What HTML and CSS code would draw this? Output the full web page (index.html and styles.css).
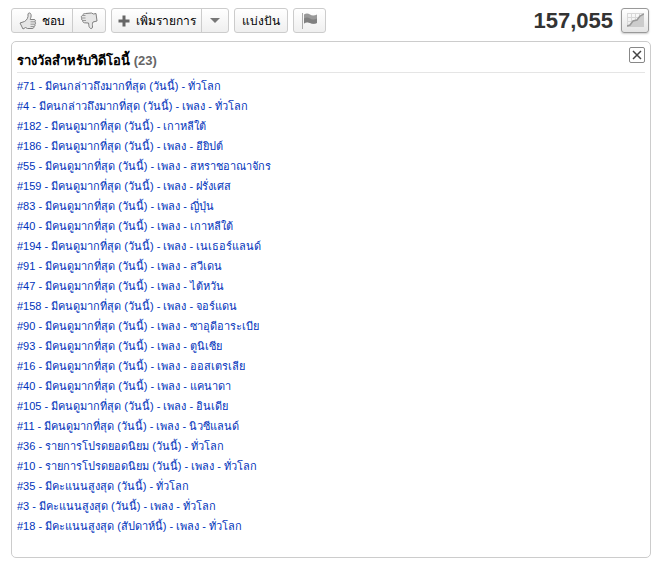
FILE: index.html
```html
<!DOCTYPE html>
<html lang="th">
<head>
  <meta charset="UTF-8" />
  <meta name="viewport" content="width=device-width, initial-scale=1.0"/>
  <title>รางวัลสำหรับวิดีโอนี้</title>
  <link rel="stylesheet" href="styles.css">
</head>
<body>
  <div class="actions">
    <div class="btn-group">
      <button type="button" class="btn btn-like">
        <svg width="18" height="18" viewBox="0 0 18 18" aria-hidden="true">
          <path class="thumb" d="M1 11L5.500 9.500C8 8 9.500 5.500 9 2C9.500.5 11.500.5 12 2.500C12.500 4.500 11.500 6 11.200 7.500L15 7.500C16.800 7.500 16.800 9.500 15.800 9.800C17 10.500 16.800 12 15.700 12.200C16.500 13 16 14.300 15 14.500C15.200 15.500 14.500 16.500 13 16.500L8.500 16.500L6.500 15.500L4 17Z"/>
          <path class="thumb-line" d="M11.500 9.800H16M11.500 12.200H15.700M11.500 14.500H15"/>
        </svg>
        <span>ชอบ</span>
      </button>
      <button type="button" class="btn btn-dislike" aria-label="ไม่ชอบ">
        <svg width="18" height="18" viewBox="0 0 18 18" aria-hidden="true">
          <path class="thumb" d="M2.500 3.500C3 2 4 1.500 5.500 1.500L11.500 1L13.500 2L16 1.500L17 9L13 10C12 11.500 12.500 13.500 12.500 15C12.300 17 10.500 17 9.500 15.500C8.500 14 9 12.500 8.500 11L4.500 10.800C2.800 10.500 2.500 9.500 3 8.500C1.500 8.200 1 6.800 2 6C.8 5.500 1.200 3.800 2.500 3.500Z"/>
          <path class="thumb-line" d="M2.500 3.500H5.500M2 6H5.500M3 8.500H6"/>
        </svg>
      </button>
    </div>

    <div class="btn-group">
      <button type="button" class="btn btn-add">
        <svg width="12" height="12" viewBox="0 0 12 12" aria-hidden="true">
          <path fill="#666" d="M4.500 .5h3v4h4v3h-4v4h-3v-4h-4v-3h4z"/>
        </svg>
        <span>เพิ่มรายการ</span>
      </button>
      <button type="button" class="btn btn-menu" aria-label="เมนู">
        <svg width="10" height="5" viewBox="0 0 10 5" aria-hidden="true">
          <path fill="#777" d="M0 0h10L5 5z"/>
        </svg>
      </button>
    </div>

    <div class="btn-group">
      <button type="button" class="btn btn-share">แบ่งปัน</button>
    </div>

    <div class="btn-group">
      <button type="button" class="btn btn-flag" aria-label="รายงาน">
        <svg width="16" height="16" viewBox="0 0 16 16" aria-hidden="true">
          <path stroke="#aaa" d="M.5 0v16"/>
          <path fill="#999" d="M2 1.500C4 0 6 0 8 1.500S13 2.500 15 1.500V10C13 11 10 11 8 10S4 9 2 10.500z"/>
          <path fill="#808080" d="M2 5.500C4 4 6 4 8 5.500S13 6.500 15 5.500V10C13 11 10 11 8 10S4 9 2 10.500z"/>
        </svg>
      </button>
    </div>

    <div class="views">
      <strong class="view-count">157,055</strong>
      <button type="button" class="btn-stats" aria-label="สถิติ">
        <svg width="17" height="15" viewBox="0 0 17 15" aria-hidden="true">
          <path fill="none" stroke="#d8d8d8" d="M.5 0v14M4.500 0v14M8.500 0v14M12.500 0v14M16.500 0v14M0 .5h17M0 4.500h17M0 8.500h17M0 12.500h17"/>
          <path fill="#ccc" d="M0 13L3 12L6 8L10 7L13 3L17 1V14H0z"/>
          <path fill="none" stroke="#999" stroke-width="1.500" d="M0 13L3 12L6 8L10 7L13 3L17 1"/>
        </svg>
      </button>
    </div>
  </div>

  <div class="panel">
    <div class="panel-header">
      <h1>รางวัลสำหรับวิดีโอนี้ <span class="count">(23)</span></h1>
      <button type="button" class="btn-close" aria-label="ปิด">
        <svg width="10" height="10" viewBox="0 0 10 10" aria-hidden="true">
          <path fill="none" stroke="#444" stroke-width="1.500" d="M1 1l8 8M9 1l-8 8"/>
        </svg>
      </button>
    </div>

    <ul class="honors">
      <li><a href="#">#71 - มีคนกล่าวถึงมากที่สุด (วันนี้) - ทั่วโลก</a></li>
      <li><a href="#">#4 - มีคนกล่าวถึงมากที่สุด (วันนี้) - เพลง - ทั่วโลก</a></li>
      <li><a href="#">#182 - มีคนดูมากที่สุด (วันนี้) - เกาหลีใต้</a></li>
      <li><a href="#">#186 - มีคนดูมากที่สุด (วันนี้) - เพลง - อียิปต์</a></li>
      <li><a href="#">#55 - มีคนดูมากที่สุด (วันนี้) - เพลง - สหราชอาณาจักร</a></li>
      <li><a href="#">#159 - มีคนดูมากที่สุด (วันนี้) - เพลง - ฝรั่งเศส</a></li>
      <li><a href="#">#83 - มีคนดูมากที่สุด (วันนี้) - เพลง - ญี่ปุ่น</a></li>
      <li><a href="#">#40 - มีคนดูมากที่สุด (วันนี้) - เพลง - เกาหลีใต้</a></li>
      <li><a href="#">#194 - มีคนดูมากที่สุด (วันนี้) - เพลง - เนเธอร์แลนด์</a></li>
      <li><a href="#">#91 - มีคนดูมากที่สุด (วันนี้) - เพลง - สวีเดน</a></li>
      <li><a href="#">#47 - มีคนดูมากที่สุด (วันนี้) - เพลง - ไต้หวัน</a></li>
      <li><a href="#">#158 - มีคนดูมากที่สุด (วันนี้) - เพลง - จอร์แดน</a></li>
      <li><a href="#">#90 - มีคนดูมากที่สุด (วันนี้) - เพลง - ซาอุดีอาระเบีย</a></li>
      <li><a href="#">#93 - มีคนดูมากที่สุด (วันนี้) - เพลง - ตูนิเซีย</a></li>
      <li><a href="#">#16 - มีคนดูมากที่สุด (วันนี้) - เพลง - ออสเตรเลีย</a></li>
      <li><a href="#">#40 - มีคนดูมากที่สุด (วันนี้) - เพลง - แคนาดา</a></li>
      <li><a href="#">#105 - มีคนดูมากที่สุด (วันนี้) - เพลง - อินเดีย</a></li>
      <li><a href="#">#11 - มีคนดูมากที่สุด (วันนี้) - เพลง - นิวซีแลนด์</a></li>
      <li><a href="#">#36 - รายการโปรดยอดนิยม (วันนี้) - ทั่วโลก</a></li>
      <li><a href="#">#10 - รายการโปรดยอดนิยม (วันนี้) - เพลง - ทั่วโลก</a></li>
      <li><a href="#">#35 - มีคะแนนสูงสุด (วันนี้) - ทั่วโลก</a></li>
      <li><a href="#">#3 - มีคะแนนสูงสุด (วันนี้) - เพลง - ทั่วโลก</a></li>
      <li><a href="#">#18 - มีคะแนนสูงสุด (สัปดาห์นี้) - เพลง - ทั่วโลก</a></li>
    </ul>
  </div>
</body>
</html>
```
FILE: styles.css
```css
* {
  box-sizing: border-box;
}
body {
  margin: 0;
  padding: 8px 6px 6px 11px;
  font-family: "Liberation Sans", Arial, sans-serif;
  font-size: 11px;
  color: #000;
  background: #fff;
}
button {
  margin: 0;
  padding: 0;
  font: inherit;
  color: inherit;
  cursor: pointer;
}
svg {
  display: block;
  flex: none;
}
.actions {
  display: flex;
  align-items: center;
  gap: 5px;
  height: 25px;
}
.btn-group {
  display: flex;
  height: 25px;
  border: 1px solid #ccc;
  border-radius: 3px;
  background: linear-gradient(#fff, #efefef);
}
.btn {
  display: flex;
  align-items: center;
  justify-content: center;
  gap: 5px;
  border: 0;
  background: none;
  font-size: 12px;
  white-space: nowrap;
}
.btn + .btn {
  border-left: 1px solid #ccc;
}
.btn-like {
  width: 60px;
}
.btn-dislike {
  width: 33px;
}
.btn-add {
  gap: 6px;
  width: 89px;
}
.btn-menu {
  width: 27px;
}
.btn-share {
  width: 52px;
}
.btn-flag {
  width: 31px;
}
.thumb {
  fill: #e6e6e6;
  stroke: #808080;
  stroke-linejoin: round;
}
.thumb-line {
  fill: none;
  stroke: #999;
}
.views {
  display: flex;
  align-items: center;
  gap: 8px;
  margin-left: auto;
  padding-right: 2px;
}
.view-count {
  font-size: 22px;
  line-height: 25px;
  color: #333;
}
.btn-stats {
  display: flex;
  align-items: center;
  justify-content: center;
  width: 28px;
  height: 25px;
  border: 1px solid #999;
  border-radius: 3px;
  background: linear-gradient(#fff, #e4e4e4);
  box-shadow: 0 1px 2px #ccc;
}
.panel {
  margin-top: 8px;
  padding: 5px 5px 21px;
  border: 1px solid #ccc;
  border-radius: 5px;
}
.panel-header {
  display: flex;
  justify-content: space-between;
  height: 26px;
  border-bottom: 1px solid #e5e5e5;
}
h1 {
  margin: 4px 0 0;
  font-size: 13px;
  line-height: 20px;
  white-space: nowrap;
}
.count {
  color: #666;
}
.btn-close {
  display: flex;
  align-items: center;
  justify-content: center;
  width: 16px;
  height: 16px;
  border: 1px solid #888;
  border-radius: 2px;
  background: #fff;
}
.honors {
  margin: 3px 0 0;
  padding: 0;
  list-style: none;
}
.honors li {
  height: 20px;
  line-height: 20px;
  white-space: nowrap;
}
.honors a {
  color: #03b;
  text-decoration: none;
}
```
